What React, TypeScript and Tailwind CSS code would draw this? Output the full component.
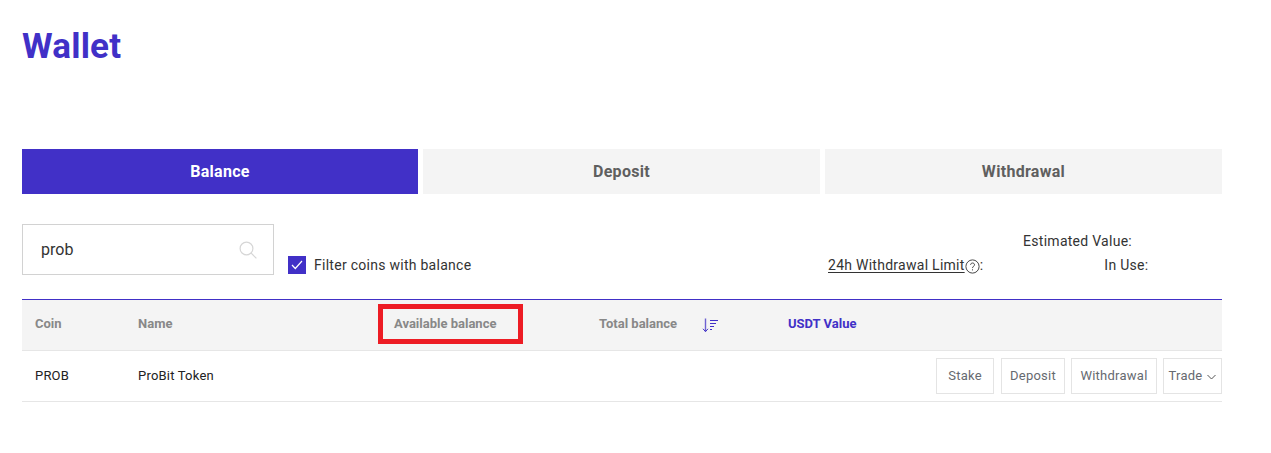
import React from "react";

function SearchIcon() {
  return (
    <svg width="18" height="18" viewBox="0 0 18 18" fill="none" stroke="#d6d6d6" strokeWidth="1.2">
      <circle cx="7.5" cy="7.5" r="6.4" />
      <path d="M12.2 12.2L17.4 17.4" />
    </svg>
  );
}

function SortIcon() {
  return (
    <svg width="17" height="15" viewBox="0 0 17 15" fill="none" stroke="#4130c7" strokeWidth="1">
      <path d="M3.5 0.5V13.5" strokeWidth="1.4" strokeOpacity="0.75" />
      <path d="M1 10.8L3.5 13.6L6 10.8" />
      <path d="M8 2.5H16M8 5.5H14M8 8.5H12M8 11.5H10" />
    </svg>
  );
}

function Btn({ children, w }: { children: React.ReactNode; w: string }) {
  return (
    <div className={`h-9 flex items-center justify-center border border-[#e4e4e4] text-[13px] text-[#666a70] tracking-[0.25px] ${w}`}>
      {children}
    </div>
  );
}

export default function App() {
  return (
    <div className="relative w-[1271px] h-[453px] bg-white pl-[22px] font-['Roboto',sans-serif] overflow-hidden">
      <h1 className="pt-[26px] h-[149px] text-[35px] leading-[42px] font-bold text-[#4130c7] tracking-[0.2px]">Wallet</h1>

      <div className="w-[1200px] flex gap-[5px] h-[45px] text-[16px] font-bold tracking-[0.3px]">
        <div className="w-[396px] flex items-center justify-center bg-[#4130c7] text-white">Balance</div>
        <div className="w-[397px] flex items-center justify-center bg-[#f4f4f4] text-[#5f5f5f]">Deposit</div>
        <div className="w-[397px] flex items-center justify-center bg-[#f4f4f4] text-[#5f5f5f]">Withdrawal</div>
      </div>

      <div className="w-[1200px] flex mt-[30px] h-[75px] text-[14px] text-[#333] tracking-[0.27px]">
        <div className="w-[252px] h-[51px] border border-[#d2d2d2] flex items-center justify-between pl-[18px] pr-[16px]">
          <span className="text-[16px] tracking-normal text-[#333]">prob</span>
          <SearchIcon />
        </div>
        <div className="ml-[14px] mt-[32px] h-[18px] flex items-center gap-[8px]">
          <div className="w-[18px] h-[18px] bg-[#4130c7] flex items-center justify-center">
            <svg width="12" height="10" viewBox="0 0 12 10" fill="none" stroke="#fff" strokeWidth="1.2">
              <path d="M1 5L4.3 8.5L11 1" />
            </svg>
          </div>
          <span>Filter coins with balance</span>
        </div>
        <div className="ml-auto w-[394px] h-[50px] pt-[9px]">
          <div className="flex justify-end pr-[90px] h-[17px] leading-[17px]">Estimated Value:</div>
          <div className="flex mt-[7px] h-[17px] leading-[17px]">
            <span className="underline underline-offset-2">24h Withdrawal Limit</span>
            <svg className="mt-[2px]" width="15" height="15" viewBox="0 0 15 15" fill="none" stroke="#333" strokeWidth="0.9">
              <circle cx="7.5" cy="7.5" r="6.6" />
              <path d="M5.6 5.8C5.6 3.4 9.5 3.4 9.5 5.8C9.5 7.3 7.5 7.3 7.5 9.1M7.5 10.3V11.4" />
            </svg>
            <span>:</span>
            <span className="ml-[121px]">In Use:</span>
          </div>
        </div>
      </div>

      <div className="w-[1200px] border-t border-t-[#4130c7] h-[52px] bg-[#f4f4f4] border-b border-b-[#e6e6e6] flex items-center text-[13px] leading-[15px] font-bold text-[#888]">
        <div className="w-[116px] pl-[13px] -mt-[4px]">Coin</div>
        <div className="w-[256px] -mt-[4px]">Name</div>
        <div className="w-[205px] -mt-[4px]">Available balance</div>
        <div className="w-[103px] -mt-[4px]">Total balance</div>
        <div className="w-[86px]"><SortIcon /></div>
        <div className="text-[#4130c7] -mt-[4px]">USDT Value</div>
      </div>

      <div className="w-[1200px] h-[51px] border-b border-[#e6e6e6] flex items-center text-[13px] text-[#222] tracking-[0.2px]">
        <div className="w-[116px] pl-[13px]">PROB</div>
        <div>ProBit Token</div>
        <div className="ml-auto flex gap-[6px]">
          <Btn w="w-[58px]">Stake</Btn>
          <Btn w="w-[64px] ml-[1px]">Deposit</Btn>
          <Btn w="w-[86px]">Withdrawal</Btn>
          <Btn w="w-[59px] gap-[5px]">
            Trade
            <svg width="9" height="6" className="mt-[2px]" viewBox="0 0 9 6" fill="none" stroke="#555" strokeWidth="1">
              <path d="M0.5 1L4.5 5L8.5 1" />
            </svg>
          </Btn>
        </div>
      </div>

      <div className="absolute left-[378px] top-[304px] w-[145px] h-[40px] border-[5px] border-[#ed1c24]" />
    </div>
  );
}
